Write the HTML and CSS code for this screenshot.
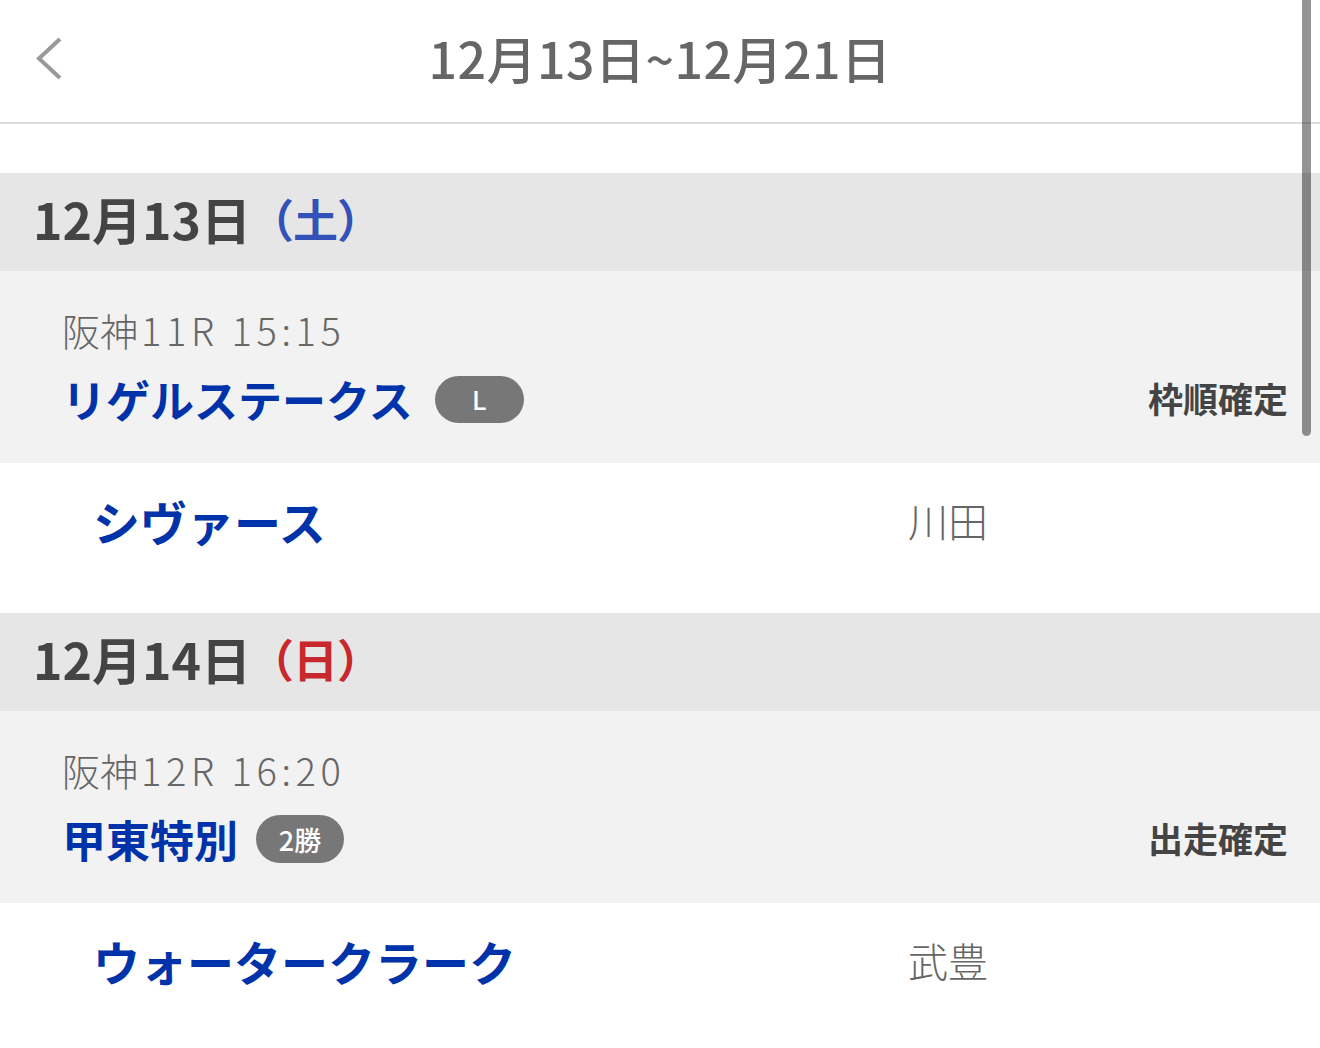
FILE: index.html
```html
<!DOCTYPE html>
<html lang="ja">
<head>
<meta charset="utf-8">
<title>12月13日~12月21日</title>
<link rel="stylesheet" href="styles.css">
</head>
<body>
<div class="page">
  <header class="topbar">
    <div class="back">
      <svg width="28" height="44" viewBox="0 0 28 44" aria-hidden="true">
        <path d="M24 2 L3 21.5 L24 41" fill="none" stroke="#999" stroke-width="4" stroke-linecap="butt" stroke-linejoin="miter"/>
      </svg>
    </div>
    <h1 class="title">12月13日~12月21日</h1>
    <div class="spacer"></div>
  </header>

  <div class="gap"></div>

  <section class="day">
    <h2 class="day-head">12月13日<span class="dow sat">（土）</span></h2>
    <div class="race">
      <div class="race-meta">阪神<span class="num">11R 15:15</span></div>
      <div class="race-line">
        <div class="race-name">リゲルステークス<span class="badge">L</span></div>
        <div class="status">枠順確定</div>
      </div>
    </div>
    <div class="horse">
      <div class="horse-name">シヴァース</div>
      <div class="jockey">川田</div>
    </div>
  </section>

  <section class="day">
    <h2 class="day-head">12月14日<span class="dow sun">（日）</span></h2>
    <div class="race">
      <div class="race-meta">阪神<span class="num">12R 16:20</span></div>
      <div class="race-line">
        <div class="race-name">甲東特別<span class="badge badge-class">2勝</span></div>
        <div class="status">出走確定</div>
      </div>
    </div>
    <div class="horse">
      <div class="horse-name">ウォータークラーク</div>
      <div class="jockey">武豊</div>
    </div>
  </section>

  <div class="scrollbar"></div>
</div>
</body>
</html>
```

FILE: styles.css
```css
* { box-sizing: border-box; }

html, body {
  margin: 0;
  padding: 0;
  background: #fff;
}

body {
  font-family: "Noto Sans CJK JP", "Noto Sans", sans-serif;
  color: #444;
  overflow: hidden;
}

.page {
  position: relative;
  width: 1320px;
  height: 1048px;
  overflow: hidden;
}

.topbar {
  height: 124px;
  border-bottom: 2px solid #dedede;
  display: grid;
  grid-template-columns: 1fr auto 1fr;
  align-items: center;
}

.back {
  padding-left: 36px;
  padding-bottom: 4px;
  display: flex;
  align-items: center;
}

.title {
  margin: 0;
  font-size: 50px;
  font-weight: 500;
  color: #666;
  letter-spacing: 0.5px;
  line-height: 1;
  padding-bottom: 8px;
}

.gap {
  height: 49px;
}

.day-head {
  margin: 0;
  height: 98px;
  background: #e6e6e6;
  padding-left: 33px;
  padding-bottom: 8px;
  display: flex;
  align-items: center;
  font-size: 50px;
  font-weight: 700;
  color: #444;
  line-height: 1;
}

.dow {
  font-size: 45px;
  font-weight: 700;
  letter-spacing: -1px;
  margin-left: -2px;
}
.sat { color: #3352b8; }
.sun { color: #c8282d; }

.race {
  height: 192px;
  background: #f2f2f2;
  padding: 34px 32px 0 62px;
}

.race-meta {
  font-size: 38px;
  font-weight: 300;
  color: #666;
  line-height: 50px;
}

.num {
  letter-spacing: 4.6px;
  margin-left: 3px;
}

.race-line {
  display: flex;
  align-items: center;
  justify-content: space-between;
  margin-top: 14px;
  height: 60px;
}

.race-name {
  display: flex;
  align-items: center;
  font-size: 44px;
  font-weight: 700;
  color: #0033a9;
  line-height: 1;
}

.badge {
  display: inline-flex;
  align-items: center;
  justify-content: center;
  margin-left: 22px;
  width: 89px;
  height: 47px;
  border-radius: 24px;
  background: #777;
  color: #fff;
  font-size: 26px;
  font-weight: 500;
  line-height: 1;
}

.badge-class {
  margin-left: 18px;
  width: 88px;
  height: 48px;
  font-size: 27px;
}

.status {
  font-size: 35px;
  font-weight: 700;
  color: #444;
  line-height: 1;
  padding-bottom: 3px;
}

.horse {
  height: 150px;
  background: #fff;
  display: flex;
  align-items: center;
  padding-left: 93px;
  padding-bottom: 36px;
}

.horse-name {
  width: 815px;
  font-size: 47px;
  font-weight: 700;
  color: #0033a9;
  line-height: 1;
}

.jockey {
  font-size: 40px;
  font-weight: 300;
  color: #666;
  line-height: 1;
}

.scrollbar {
  position: absolute;
  top: 0;
  left: 1302px;
  width: 9px;
  height: 436px;
  border-radius: 0 0 5px 5px;
  background: rgba(0, 0, 0, 0.42);
}
```
